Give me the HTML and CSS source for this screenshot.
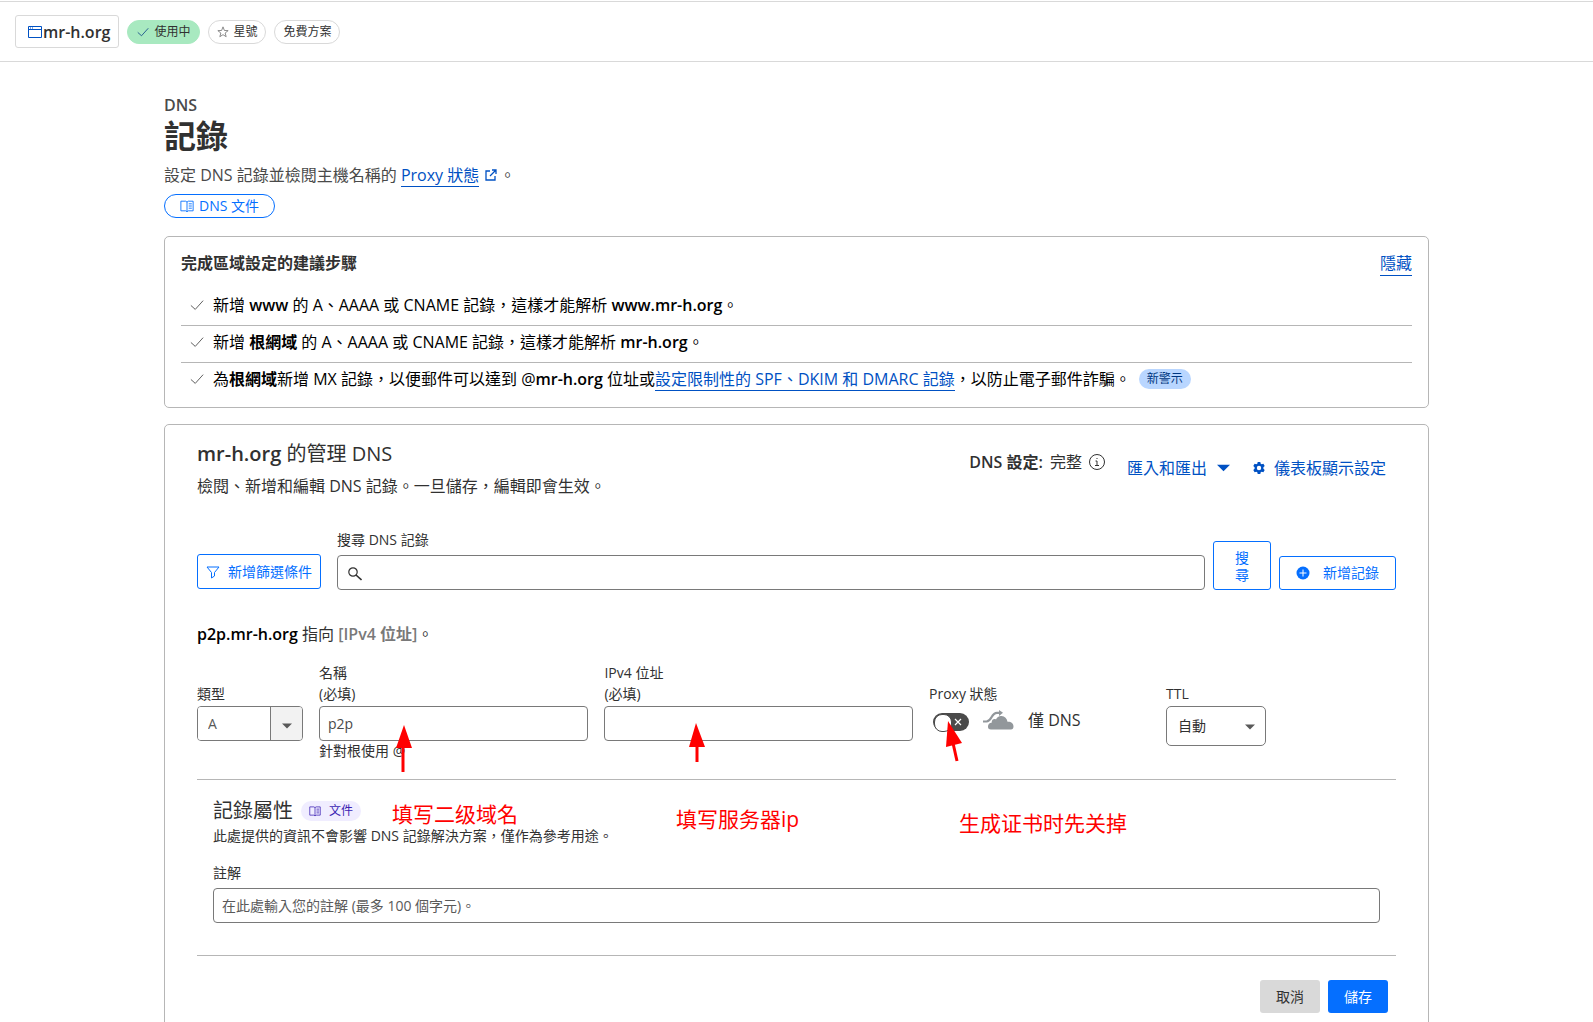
FILE: index.html
```html
<!DOCTYPE html>
<html lang="zh-Hant">
<head>
	<meta charset="UTF-8">
	<title>DNS 記錄</title>
	<link rel="stylesheet" href="styles.css">
</head>
<body>
	<svg class="sprite" aria-hidden="true">
		<symbol id="check" viewBox="0 0 16 16"><path d="M1 8.500l5 4.500L15 3" fill="none" stroke="currentColor"/></symbol>
		<symbol id="book" viewBox="0 0 16 16"><path d="M1 2.500h5.500L8 3.500l1.500-1H15v11H9.500l-1.500 1-1.500-1H1zM8 3.500v11M10 5.500h3.500M10 8h3.500M10 10.500h3.500" fill="none" stroke="currentColor"/></symbol>
		<symbol id="caret" viewBox="0 0 12 7"><path d="M0 0.500h12L6 6.500z" fill="currentColor"/></symbol>
	</svg>

	<header class="topbar">
		<button type="button" class="zone">
			<svg class="zone-icon" viewBox="0 0 14 12"><path d="M.5.5h13v11H.5zM.5 3.500h13M2 2h1M4 2h1" fill="none" stroke="currentColor"/></svg>mr-h.org
		</button>
		<span class="badge badge-active"><svg class="icon12"><use href="#check"/></svg>使用中</span>
		<button type="button" class="badge"><svg class="icon12 star" viewBox="0 0 14 14"><path d="M7 1l1.600 4.200 4.400.2-3.500 2.800 1.200 4.300L7 10.100l-3.700 2.400 1.200-4.300L1 5.400l4.400-.2z" fill="none" stroke="currentColor"/></svg>星號</button>
		<span class="badge">免費方案</span>
	</header>

	<main class="page">
		<p class="crumb">DNS</p>
		<h1>記錄</h1>
		<p class="intro">設定 DNS 記錄並檢閱主機名稱的 <a href="#" class="link">Proxy 狀態</a>
			<svg class="external" viewBox="0 0 12 12"><path d="M5 2H1v9h9V7M7 1h4v4M11 1L5 7" fill="none" stroke="currentColor" stroke-width="1.3"/></svg>。</p>
		<a href="#" class="docs"><svg class="icon14"><use href="#book"/></svg>DNS 文件</a>

		<section class="card steps">
			<div class="steps-head">
				<h2>完成區域設定的建議步驟</h2>
				<a href="#" class="link">隱藏</a>
			</div>
			<ul>
				<li><svg class="icon14"><use href="#check"/></svg><span>新增 <b>www</b> 的 A、AAAA 或 CNAME 記錄，這樣才能解析 <b>www.mr-h.org</b>。</span></li>
				<li><svg class="icon14"><use href="#check"/></svg><span>新增 <b>根網域</b> 的 A、AAAA 或 CNAME 記錄，這樣才能解析 <b>mr-h.org</b>。</span></li>
				<li><svg class="icon14"><use href="#check"/></svg><span>為<b>根網域</b>新增 MX 記錄，以便郵件可以達到 @<b>mr-h.org</b> 位址或<a href="#" class="link">設定限制性的 SPF、DKIM 和 DMARC 記錄</a>，以防止電子郵件詐騙。</span><span class="alert">新警示</span></li>
			</ul>
		</section>

		<section class="card manage">
			<div class="manage-head">
				<div class="manage-title">
					<h2><b>mr-h.org</b> 的管理 DNS</h2>
					<p>檢閱、新增和編輯 DNS 記錄。一旦儲存，編輯即會生效。</p>
				</div>
				<div class="setup"><b>DNS 設定:</b> 完整
					<svg class="info" viewBox="0 0 16 16"><circle cx="8" cy="8" r="7.500" fill="none" stroke="currentColor"/><path d="M6.500 7H8v4.500M6 11.500h4M7.500 4.500h1" fill="none" stroke="currentColor"/></svg>
				</div>
				<button type="button" class="text-btn">匯入和匯出<svg class="caret"><use href="#caret"/></svg></button>
				<button type="button" class="text-btn"><svg class="gear" viewBox="0 0 14 14"><path fill-rule="evenodd" fill="currentColor" d="M5.700 1h2.600l.4 1.700 1 .6 1.700-.5L12.700 5l-1.300 1.300v1.400L12.700 9l-1.300 2.200-1.700-.5-1 .6-.4 1.700H5.700l-.4-1.700-1-.6-1.700.5L1.300 9l1.300-1.300V6.300L1.300 5l1.300-2.200 1.700.5 1-.6zM7 4.800a2.200 2.200 0 1 0 0 4.400 2.200 2.200 0 0 0 0-4.400z"/></svg>儀表板顯示設定</button>
			</div>

			<form class="toolbar">
				<button type="button" class="btn filter"><svg class="icon14" viewBox="0 0 14 14"><path d="M1 2h12L8.500 7.500V11l-3 2V7.500z" fill="none" stroke="currentColor"/></svg>新增篩選條件</button>
				<div class="search">
					<label for="search">搜尋 DNS 記錄</label>
					<div class="search-box">
						<svg class="icon14" viewBox="0 0 14 14"><circle cx="5" cy="5" r="4.200" fill="none" stroke="currentColor" stroke-width="1.200"/><path d="M8 8l5.500 5" stroke="currentColor" stroke-width="1.600"/></svg>
						<input type="text" id="search" class="input">
					</div>
				</div>
				<button type="submit" class="btn find">搜尋</button>
				<button type="button" class="btn add"><svg class="icon14" viewBox="0 0 14 14"><circle cx="7" cy="7" r="6.500" fill="currentColor"/><path d="M7 3.500v7M3.500 7h7" stroke="#fff"/></svg>新增記錄</button>
			</form>

			<form>
				<p class="summary"><b>p2p.mr-h.org</b> 指向 <span>[IPv4 位址]</span>。</p>
				<div class="fields">
					<div class="field">
						<label for="type">類型</label>
						<div class="combo">
							<input type="text" id="type" value="A">
							<button type="button" aria-label="類型"><svg><use href="#caret"/></svg></button>
						</div>
					</div>
					<div class="field">
						<label for="name"><span>名稱</span><span>(必填)</span></label>
						<input type="text" id="name" class="input" value="p2p">
						<small>針對根使用 @</small>
					</div>
					<div class="field">
						<label for="ip"><span>IPv4 位址</span><span>(必填)</span></label>
						<input type="text" id="ip" class="input">
					</div>
					<div class="field">
						<label for="proxy">Proxy 狀態</label>
						<div class="proxy">
							<span class="toggle">
								<input type="checkbox" id="proxy">
								<svg viewBox="0 0 8 8"><path d="M1 1l6 6M7 1L1 7" stroke="currentColor" stroke-width="1.200"/></svg>
							</span>
							<svg class="cloud" viewBox="0 0 31 20"><path d="M8 19.500a3 3 0 0 1-3-3.200c0-2 1.500-3.500 3.600-3.600C8.700 9 11.500 8.600 13 9.500c1-2.500 3-3.700 5.500-3.500 3.300.2 5.500 2.500 6 5.800 3.500-.3 6 1.700 6 4.700 0 2-1 3-2.500 3z" fill="currentColor"/><path d="M0 11.500h3.500C9 11.500 8 2.800 14 2.800h3" fill="none" stroke="currentColor" stroke-width="2.200"/><path d="M16 0l4 2.800-4 3.200z" fill="currentColor"/></svg>
							<span>僅 DNS</span>
						</div>
					</div>
					<div class="field">
						<label for="ttl">TTL</label>
						<div class="select">
							<select id="ttl"><option>自動</option></select>
							<svg><use href="#caret"/></svg>
						</div>
					</div>

					<!-- notes over the form -->
					<svg class="arrow arrow-name" viewBox="0 0 20 50"><path d="M9 48V22" stroke="currentColor" stroke-width="3"/><path d="M10 1L2 24h16z" fill="currentColor"/></svg>
					<svg class="arrow arrow-ip" viewBox="0 0 20 50"><path d="M11 39V22" stroke="currentColor" stroke-width="3"/><path d="M10 0L3 24h16z" fill="currentColor"/></svg>
					<svg class="arrow arrow-proxy" viewBox="0 0 20 50"><path d="M12 40L8 22" stroke="currentColor" stroke-width="3"/><path d="M3 0L1 26l16-4z" fill="currentColor"/></svg>
					<span class="note note-name">填写二级域名</span>
					<span class="note note-ip">填写服务器ip</span>
					<span class="note note-proxy">生成证书时先关掉</span>
				</div>

				<div class="attributes">
					<div class="attributes-head">
						<h3>記錄屬性</h3>
						<a href="#" class="mini-docs"><svg class="icon12"><use href="#book"/></svg>文件</a>
					</div>
					<p>此處提供的資訊不會影響 DNS 記錄解決方案，僅作為參考用途。</p>
					<label for="comment">註解</label>
					<input type="text" id="comment" class="input" placeholder="在此處輸入您的註解 (最多 100 個字元)。">
				</div>

				<div class="actions">
					<button type="button" class="cancel">取消</button>
					<button type="submit" class="save">儲存</button>
				</div>
			</form>
		</section>
	</main>
</body>
</html>
```
FILE: styles.css
```css
*{
	margin: 0;
	padding: 0;
	box-sizing: border-box;
}
html{
	height: 100%;
}
body{
	height: 100%;
	overflow: hidden;
	background: #fff;
	color: #313131;
	font: 16px/24px "Open Sans", "Noto Sans CJK TC", sans-serif;
}
button, input, select{
	font: inherit;
	color: inherit;
}
button{
	background: none;
	border: 0;
	cursor: pointer;
}
b{
	font-weight: 600;
}
svg{
	flex: none;
}
.sprite{
	display: none;
}
.icon12{
	width: 12px;
	height: 12px;
}
.icon14{
	width: 14px;
	height: 14px;
}
.link{
	color: #0051c3;
	text-decoration: none;
	border-bottom: 1px solid #0051c3;
}

/* top bar */
.topbar{
	display: flex;
	align-items: center;
	gap: 8px;
	height: 61px;
	margin-top: 1px;
	padding: 0 15px;
	border-top: 1px solid #d9d9d9;
	border-bottom: 1px solid #d9d9d9;
}
.zone{
	display: flex;
	align-items: center;
	height: 33px;
	padding: 0 8px 0 12px;
	border: 1px solid #d9d9d9;
	border-radius: 3px;
	font-weight: 600;
}
.zone-icon{
	width: 14px;
	height: 12px;
	margin-right: 1px;
	color: #0051c3;
}
.badge{
	display: flex;
	align-items: center;
	gap: 4px;
	height: 24px;
	padding: 0 8px;
	border: 1px solid #d9d9d9;
	border-radius: 12px;
	font-size: 12px;
	line-height: 16px;
}
.badge-active{
	gap: 5px;
	padding: 0 9px;
	background: #a8e9c0;
	border-color: #a8e9c0;
}
.badge-active svg{
	color: #003681;
}
.star{
	color: #797979;
}

.page{
	max-width: 1297px;
	margin: 0 auto;
	padding: 31px 16px 0;
}
.crumb{
	font-weight: 600;
	color: #4a4a4a;
}
h1{
	font-size: 32px;
	line-height: 38px;
}
.intro{
	margin-top: 8px;
	color: #4a4a4a;
}
.external{
	width: 12px;
	height: 12px;
	margin: 0 2px;
	color: #0051c3;
}
.docs{
	display: inline-flex;
	align-items: center;
	gap: 5px;
	height: 24px;
	margin-top: 7px;
	padding: 0 15px;
	border: 1px solid #056fff;
	border-radius: 12px;
	color: #056fff;
	font-size: 14px;
	line-height: 20px;
	text-decoration: none;
	vertical-align: top;
}

.card{
	border: 1px solid #b6b6b6;
	border-radius: 5px;
}
.steps{
	margin-top: 18px;
	padding: 14px 16px 8px;
}
.steps-head{
	display: flex;
	justify-content: space-between;
}
.steps-head h2{
	font-size: 16px;
}
.steps ul{
	margin-top: 13px;
	list-style: none;
	color: #000;
}
.steps li{
	display: flex;
	align-items: center;
	padding: 4px 0 8px 9px;
	border-bottom: 1px solid #b6b6b6;
}
.steps li:last-child{
	border-bottom: 0;
}
.steps li .icon14{
	margin-right: 9px;
	color: #4a4a4a;
}
.alert{
	margin-left: 8px;
	padding: 0 8px;
	border-radius: 10px;
	background: #b9d6ff;
	color: #003681;
	font-size: 12px;
	line-height: 20px;
}

.manage{
	margin-top: 16px;
	padding: 15px 32px 48px;
}
.manage-head{
	display: flex;
	align-items: flex-start;
}
.manage-title{
	flex: 1;
}
.manage-title h2{
	font-size: 20px;
	font-weight: 400;
	line-height: 28px;
}
.manage-title p{
	margin-top: 6px;
}
.setup{
	display: flex;
	align-items: center;
	gap: 7px;
	margin: 10px 22px 0 0;
}
.info{
	width: 16px;
	height: 16px;
}
.text-btn{
	display: flex;
	align-items: center;
	gap: 10px;
	margin-top: 16px;
	color: #0051c3;
}
.text-btn + .text-btn{
	gap: 8px;
	margin: 16px 10px 0 22px;
}
.caret{
	width: 13px;
	height: 8px;
}
.gear{
	width: 14px;
	height: 14px;
}

/* search row */
.toolbar{
	display: flex;
	align-items: flex-end;
	gap: 8px;
	margin-top: 32px;
	font-size: 14px;
	line-height: 20px;
}
.btn{
	display: flex;
	align-items: center;
	justify-content: center;
	height: 35px;
	border: 1px solid #056fff;
	border-radius: 3px;
	color: #056fff;
}
.filter{
	gap: 8px;
	margin: 0 8px 1px 0;
	padding: 0 8px;
}
.search{
	flex: 1;
}
.search label{
	display: block;
	margin-bottom: 5px;
}
.search-box{
	position: relative;
}
.search-box svg{
	position: absolute;
	left: 11px;
	top: 12px;
}
.input{
	display: block;
	width: 100%;
	height: 35px;
	padding: 0 8px;
	border: 1px solid #797979;
	border-radius: 4px;
	background: #fff;
	color: #4a4a4a;
	font-size: 14px;
}
.search-box .input{
	padding-left: 34px;
}
.find{
	width: 58px;
	height: 49px;
	padding: 0 20px;
	line-height: 17px;
}
.add{
	gap: 13px;
	height: 34px;
	padding: 0 16px;
}

.summary{
	margin: 32px 0 16px;
}
.summary b{
	color: #000;
}
.summary span{
	color: #797979;
	font-weight: 600;
}
.fields{
	position: relative;
	display: grid;
	grid-template-columns: 106px 269fr 308fr 221px 230px;
	gap: 16px;
	padding-bottom: 18px;
	border-bottom: 1px solid #b6b6b6;
	font-size: 14px;
	line-height: 20px;
}
.field label{
	display: flex;
	flex-direction: column;
	justify-content: flex-end;
	height: 42px;
	margin-bottom: 2px;
	line-height: 21px;
}
.field small{
	font-size: 14px;
}
.combo{
	display: flex;
	height: 35px;
	border: 1px solid #797979;
	border-radius: 4px;
	overflow: hidden;
}
.combo input{
	flex: 1;
	min-width: 0;
	padding: 0 10px;
	border: 0;
	color: #595959;
}
.combo button{
	width: 32px;
	background: #f2f2f2;
	border-left: 1px solid #797979;
}
.combo svg, .select svg{
	width: 10px;
	height: 6px;
	color: #595959;
}
.proxy{
	display: flex;
	align-items: center;
	height: 27px;
	padding-left: 4px;
	font-size: 16px;
}
.toggle{
	position: relative;
	height: 18px;
	margin-top: 4px;
}
.toggle input{
	display: block;
	width: 36px;
	height: 18px;
	appearance: none;
	border-radius: 9px;
	background: #4a4a4a;
}
.toggle input::before{
	content: "";
	display: block;
	width: 16px;
	height: 16px;
	border: 1px solid #4a4a4a;
	border-radius: 8px;
	background: #fff;
	transform: translate(1px, 1px);
}
.toggle svg{
	position: absolute;
	right: 7px;
	top: 5px;
	width: 8px;
	height: 8px;
	color: #fff;
	pointer-events: none;
}
.cloud{
	width: 31px;
	height: 20px;
	margin: 0 14px;
	color: #92979b;
}
.select{
	position: relative;
	width: 100px;
}
.select select{
	display: block;
	width: 100%;
	height: 40px;
	padding: 0 11px;
	appearance: none;
	border: 1px solid #797979;
	border-radius: 5px;
	background: #fff;
}
.select svg{
	position: absolute;
	right: 11px;
	top: 18px;
	pointer-events: none;
}

/* red arrows and notes */
.arrow{
	position: absolute;
	width: 20px;
	height: 50px;
	color: #f00;
}
.arrow-name{
	left: 197px;
	top: 62px;
}
.arrow-ip{
	left: 489px;
	top: 61px;
}
.arrow-proxy{
	left: 748px;
	top: 59px;
}
.note{
	position: absolute;
	color: #f00;
	font-size: 21px;
	line-height: 28px;
	white-space: nowrap;
}
.note-name{
	left: 195px;
	top: 138px;
}
.note-ip{
	left: 479px;
	top: 143px;
}
.note-proxy{
	left: 762px;
	top: 147px;
}

.attributes{
	padding: 17px 16px 32px;
	border-bottom: 1px solid #b6b6b6;
	font-size: 14px;
	line-height: 20px;
}
.attributes-head{
	display: flex;
	align-items: center;
	gap: 8px;
	margin-bottom: 1px;
}
.attributes-head h3{
	font-size: 20px;
	font-weight: 400;
	line-height: 28px;
}
.mini-docs{
	display: flex;
	align-items: center;
	gap: 8px;
	padding: 0 8px;
	border-radius: 10px;
	background: #f0edff;
	color: #3b1fb3;
	font-size: 12px;
	text-decoration: none;
}
.attributes label{
	display: block;
	margin: 17px 0 5px;
}
.attributes .input::placeholder{
	color: #595959;
}
.actions{
	display: flex;
	justify-content: flex-end;
	gap: 8px;
	padding: 24px 8px 0;
	font-size: 14px;
	line-height: 20px;
}
.actions button{
	height: 33px;
	padding: 0 16px;
	border-radius: 3px;
}
.cancel{
	background: #d9d9d9;
}
.save{
	background: #056fff;
	color: #fff;
}
```
